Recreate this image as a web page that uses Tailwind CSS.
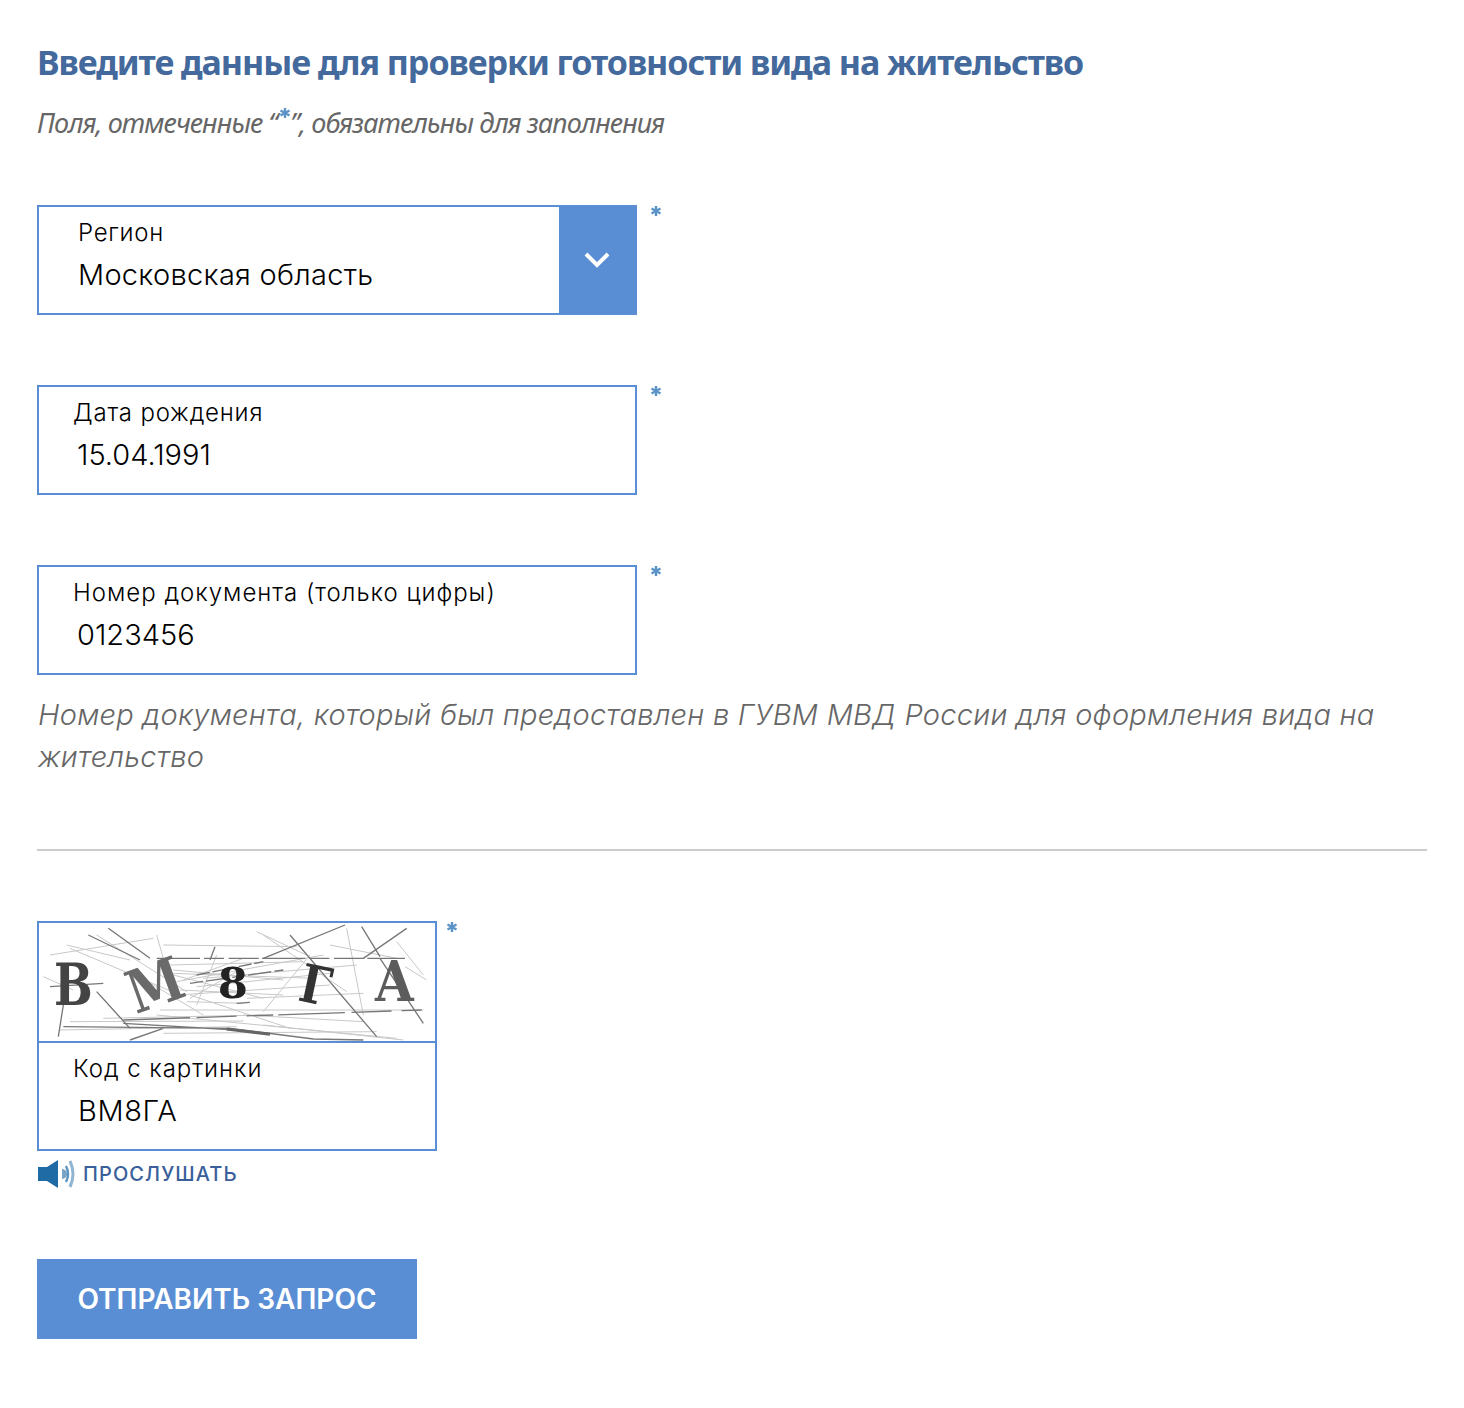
<!DOCTYPE html>
<html lang="ru">
<head>
    <meta charset="UTF-8">
    <title>Проверка готовности вида на жительство</title>
    <script src="https://cdn.jsdelivr.net/npm/@tailwindcss/browser@4"></script>
</head>
<body class="bg-white font-['Inter',sans-serif] text-black">
    <main class="w-[1464px] h-[1408px] overflow-hidden pl-[37px] pr-[37px] pt-[39px]">
        <h1 class="font-['Noto_Sans',sans-serif] font-bold text-[34px] leading-[46px] tracking-[-1.05px] text-[#44699c]">Введите данные для проверки готовности вида на жительство</h1>
        <p class="mt-[19px] h-[38px] font-['Noto_Sans',sans-serif] italic text-[27px] leading-[38px] tracking-[-0.9px] text-[#666]">Поля, отмеченные “<svg class="inline-block align-[13px] ml-[1px] -mr-[2px] blur-[0.4px]" width="14" height="14" viewBox="0 0 14 14" stroke="#5b93c7" stroke-width="2.4"><path d="M7 2v10M2.5 4.500l9 5M11.500 4.500l-9 5"/></svg>”, обязательны для заполнения</p>

        <!-- регион -->
        <div class="mt-[63px] flex items-start">
            <div class="w-[600px] h-[110px] border-2 border-[#5a8ed4] flex">
                <div class="flex-1 pl-[39px] pt-[10px]">
                    <div class="text-[24px] leading-[32px] font-light tracking-[0.7px]">Регион</div>
                    <div class="mt-[6px] text-[29px] leading-[40px] font-light tracking-[0.28px]">Московская область</div>
                </div>
                <div class="w-[78px] -my-[2px] -mr-[2px] pr-[2px] bg-[#5a8ed4] flex items-center justify-center">
                    <svg width="26" height="16" viewBox="0 0 26 16" fill="none" stroke="#fff" stroke-width="4"><path d="M2 2l11 11L24 2"/></svg>
                </div>
            </div>
            <svg class="ml-[12px] -mt-[1px] blur-[0.4px]" width="14" height="14" viewBox="0 0 14 14" stroke="#5b93c7" stroke-width="2.4"><path d="M7 2v10M2.5 4.500l9 5M11.500 4.500l-9 5"/></svg>
        </div>

        <!-- дата рождения -->
        <div class="mt-[70px] flex items-start">
            <div class="w-[600px] h-[110px] border-2 border-[#5a8ed4] pt-[10px]">
                <div class="pl-[34px] text-[24px] leading-[32px] font-light tracking-[0.8px]">Дата рождения</div>
                <div class="mt-[6px] pl-[38px] text-[29px] leading-[40px] font-light">15.04.1991</div>
            </div>
            <svg class="ml-[12px] -mt-[1px] blur-[0.4px]" width="14" height="14" viewBox="0 0 14 14" stroke="#5b93c7" stroke-width="2.4"><path d="M7 2v10M2.5 4.500l9 5M11.500 4.500l-9 5"/></svg>
        </div>

        <!-- номер документа -->
        <div class="mt-[70px] flex items-start">
            <div class="w-[600px] h-[110px] border-2 border-[#5a8ed4] pt-[10px]">
                <div class="pl-[34px] text-[24px] leading-[32px] font-light tracking-[1px]">Номер документа (только цифры)</div>
                <div class="mt-[6px] pl-[38px] text-[29px] leading-[40px] font-light">0123456</div>
            </div>
            <svg class="ml-[12px] -mt-[1px] blur-[0.4px]" width="14" height="14" viewBox="0 0 14 14" stroke="#5b93c7" stroke-width="2.4"><path d="M7 2v10M2.5 4.500l9 5M11.500 4.500l-9 5"/></svg>
        </div>
        <p class="mt-[19px] pl-[1px] text-[29px] leading-[42px] italic font-light tracking-[0.26px] text-[#666]">Номер документа, который был предоставлен в ГУВМ МВД России для оформления вида на жительство</p>

        <div class="mt-[71px] h-[2px] bg-[#ccc]"></div>

        <!-- капча -->
        <div class="mt-[70px] flex items-start">
            <div class="w-[400px] h-[230px] border-2 border-[#5a8ed4]">
                <svg class="block w-[396px] h-[118px] blur-[0.7px]" viewBox="27 24 1188 354" fill="none">
                    <g stroke="#c8c8c8" stroke-width="3">
                        <path d="M400 90L800 95M680 50L830 120M950 40L1000 300M1125 155L1190 195M110 90L300 135M40 185L130 225"/>
                        <path d="M380 60L400 130M840 120L700 290M390 285L1180 285M210 240L290 330M520 190L980 150M500 215L900 175"/>
                        <path d="M480 240L780 340M380 300L1100 370M560 120L500 270M430 180L700 250M90 345L620 335M700 330L1120 375"/>
                        <path d="M420 150L820 140M430 165L760 195M440 200L880 120M450 225L760 240M470 260L640 265M120 100L450 240M200 60L470 230"/>
                        <path d="M60 120L370 70M640 300L1000 320M220 310L700 300M320 180L520 300M900 90L1100 130M1100 80L1180 180M700 60L950 230"/>
                        <path d="M430 175L850 190M440 240L900 210M460 195L640 130M480 250L620 170M120 320L640 318M650 250L1000 235M400 355L1040 350"/>
                    </g>
                    <g stroke="#777" stroke-width="4">
                        <path d="M235 40L360 130M175 60L330 135M945 30L700 130M1130 40L1000 130M995 35L1050 125M555 95L540 135"/>
                        <path d="M380 130L1125 130" stroke-dasharray="130 12 60 14 90 10"/>
                        <path d="M780 60L1040 365M1050 130L1180 325M100 270L85 365M60 215L220 205M200 230L300 340"/>
                        <path d="M280 315L1175 285" stroke-dasharray="200 20 120 30 80 15"/>
                        <path d="M100 335L600 340L850 372L1000 375M300 375L400 340M280 325L620 345"/>
                        <path d="M480 205L760 165M500 180L700 140M620 265L660 262" stroke-dasharray="40 8 70 10"/>
                    </g>
                    <path d="M590 342L720 358" stroke="#666" stroke-width="9"/>
                    <g font-family="DejaVu Serif, serif" font-weight="700" fill="#444">
                        <text transform="translate(72 270) scale(0.8 1)" font-size="172">B</text>
                        <text transform="translate(318 298) rotate(-20) scale(0.85 1)" font-size="178" fill="#6a6a6a">M</text>
                        <text x="563" y="248" font-size="130" fill="#222">8</text>
                        <text transform="translate(800 255) rotate(12) scale(0.85 1)" font-size="158" fill="#333">Г</text>
                        <text transform="translate(1035 258) scale(0.88 1)" font-size="170" fill="#5c5c5c">A</text>
                    </g>
                </svg>
                <div class="border-t-2 border-[#5a8ed4] pt-[10px]">
                    <div class="pl-[34px] text-[24px] leading-[32px] font-light tracking-[0.95px]">Код с картинки</div>
                    <div class="mt-[6px] pl-[39px] text-[29px] leading-[40px] font-light tracking-[0.6px]">ВМ8ГА</div>
                </div>
            </div>
            <svg class="ml-[8px] -mt-[1px] blur-[0.4px]" width="14" height="14" viewBox="0 0 14 14" stroke="#5b93c7" stroke-width="2.4"><path d="M7 2v10M2.5 4.500l9 5M11.500 4.500l-9 5"/></svg>
        </div>

        <!-- прослушать -->
        <div class="mt-[8px] flex items-center h-[30px]">
            <svg class="blur-[0.5px]" width="38" height="30" viewBox="0 0 38 30" fill="none">
                <path d="M1 8h9L21 1v28L10 22H1z" fill="#1f6ba5"/>
                <path d="M25 10a5 5 0 0 1 0 10z" fill="#7aa3c4"/>
                <path d="M29 7q4 8 0 16" stroke="#5f97c2" stroke-width="2.500"/>
                <path d="M33 2q6 13 0 26" stroke="#8fb5d2" stroke-width="3"/>
            </svg>
            <a class="ml-[8px] font-medium text-[20px] leading-[30px] tracking-[1.1px] text-[#3a5f9a]">ПРОСЛУШАТЬ</a>
        </div>

        <button class="mt-[70px] block w-[380px] h-[80px] bg-[#5a8ed4] text-white font-semibold text-[28px] text-center">ОТПРАВИТЬ ЗАПРОС</button>
    </main>
</body>
</html>
